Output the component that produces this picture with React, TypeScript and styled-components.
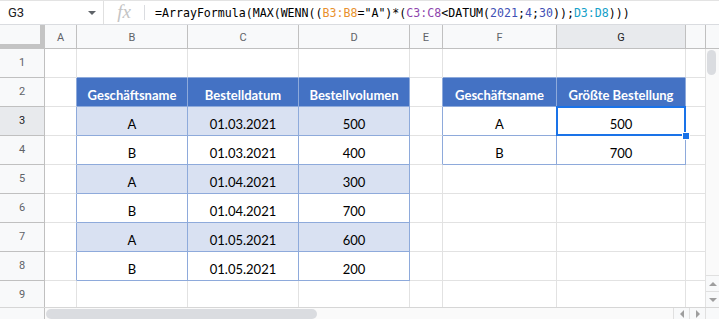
import React from 'react';
import styled, { createGlobalStyle } from 'styled-components';

const GlobalStyle = createGlobalStyle`
  html, body {
    margin: 0;
    padding: 0;
    background: #ffffff;
  }
  body {
    font-family: Roboto, "Liberation Sans", sans-serif;
  }
`;

const GRID = '#e2e2e2';
const HEAD_LINE = '#c0c0c0';
const TABLE_LINE = '#8eaadb';
const TABLE_HEAD = '#4472c4';
const BAND = '#d9e1f2';

// H is only partly visible, so its label is hidden
const columns = [
  { key: 'A', width: 32, label: 'A' },
  { key: 'B', width: 111, label: 'B' },
  { key: 'C', width: 111, label: 'C' },
  { key: 'D', width: 111, label: 'D' },
  { key: 'E', width: 33, label: 'E' },
  { key: 'F', width: 114, label: 'F' },
  { key: 'G', width: 129, label: 'G' },
  { key: 'H', width: 20, label: '' },
];

const cells: Record<string, string> = {
  B2: 'Geschäftsname',
  C2: 'Bestelldatum',
  D2: 'Bestellvolumen',
  F2: 'Geschäftsname',
  G2: 'Größte Bestellung',
  B3: 'A', C3: '01.03.2021', D3: '500',
  B4: 'B', C4: '01.03.2021', D4: '400',
  B5: 'A', C5: '01.04.2021', D5: '300',
  B6: 'B', C6: '01.04.2021', D6: '700',
  B7: 'A', C7: '01.05.2021', D7: '600',
  B8: 'B', C8: '01.05.2021', D8: '200',
  F3: 'A', G3: '500',
  F4: 'B', G4: '700',
};

const rows = [1, 2, 3, 4, 5, 6, 7, 8, 9];
const selCol = 7;
const selRow = 3;

// col index: A = 1 ... H = 8
const inMain = (c: number, r: number) => c >= 2 && c <= 4 && r >= 2 && r <= 8;
const inSide = (c: number, r: number) => c >= 6 && c <= 7 && r >= 2 && r <= 4;
const inTable = (c: number, r: number) => inMain(c, r) || inSide(c, r);

const rightLine = (c: number, r: number) =>
  inTable(c, r) || inTable(c + 1, r) ? TABLE_LINE : GRID;
const bottomLine = (c: number, r: number) =>
  inTable(c, r) || inTable(c, r + 1) ? TABLE_LINE : GRID;

const cellFill = (c: number, r: number) => {
  if (!inTable(c, r)) return '#ffffff';
  if (r === 2) return TABLE_HEAD;
  if (inMain(c, r) && r % 2 === 1) return BAND;
  return '#ffffff';
};

const formula: { text: string; color?: string }[] = [
  { text: '=ArrayFormula(MAX(WENN((' },
  { text: 'B3:B8', color: '#e8912d' },
  { text: '="A")*(' },
  { text: 'C3:C8', color: '#8e44ad' },
  { text: '<DATUM(' },
  { text: '2021', color: '#3f51b5' },
  { text: ';' },
  { text: '4', color: '#3f51b5' },
  { text: ';' },
  { text: '30', color: '#3f51b5' },
  { text: '));' },
  { text: 'D3:D8', color: '#15a0c8' },
  { text: ')))' },
];

export default function App() {
  return (
    <Page>
      <GlobalStyle />
      <FormulaBar>
        <NameBox>
          <NameText>G3</NameText>
          <Caret />
        </NameBox>
        <FxMark>fx</FxMark>
        <FxDivider />
        <FormulaText>
          {formula.map((part, i) => (
            <Token key={i} $color={part.color}>
              {part.text}
            </Token>
          ))}
        </FormulaText>
      </FormulaBar>

      <SheetArea>
        <Grid>
          <Corner />
          {columns.map((col, i) => (
            <ColHead key={col.key} $active={i + 1 === selCol}>
              {col.label}
            </ColHead>
          ))}
          {rows.map((r) => (
            <React.Fragment key={r}>
              <RowHead $active={r === selRow}>{r}</RowHead>
              {columns.map((col, i) => {
                const c = i + 1;
                const value = cells[col.key + r];
                const isHead = r === 2 && inTable(c, r);
                return (
                  <Cell
                    key={col.key}
                    $bg={cellFill(c, r)}
                    $right={rightLine(c, r)}
                    $bottom={bottomLine(c, r)}
                    $head={isHead}
                  >
                    {value}
                    {c === selCol && r === selRow && (
                      <Selection>
                        <FillHandle />
                      </Selection>
                    )}
                  </Cell>
                );
              })}
            </React.Fragment>
          ))}
        </Grid>

        <VScroll>
          <VScrollHead />
          <VTrack>
            <VThumb />
          </VTrack>
          <VButton>
            <Arrow $dir="up" />
          </VButton>
          <VButton>
            <Arrow $dir="down" />
          </VButton>
        </VScroll>
      </SheetArea>

      <HScroll>
        <HLead />
        <HTrack>
          <HThumb />
        </HTrack>
        <HButton>
          <Arrow $dir="left" />
        </HButton>
        <HButton>
          <Arrow $dir="right" />
        </HButton>
        <HCorner />
      </HScroll>
    </Page>
  );
}

const Page = styled.div`
  width: 719px;
  height: 319px;
  overflow: hidden;
  display: flex;
  flex-direction: column;
  background: #ffffff;
`;

const FormulaBar = styled.div`
  box-sizing: border-box;
  height: 25px;
  flex: none;
  display: flex;
  align-items: center;
  border-top: 1px solid #e3e3e3;
  border-bottom: 1px solid #dadce0;
`;

const NameBox = styled.div`
  box-sizing: border-box;
  width: 104px;
  height: 100%;
  display: flex;
  align-items: center;
  padding-left: 8px;
  border-right: 1px solid #e0e0e0;
`;

const NameText = styled.span`
  font-family: Roboto, "Liberation Sans", sans-serif;
  font-size: 13px;
  color: #202124;
`;

const Caret = styled.span`
  margin-left: auto;
  margin-right: 7px;
  width: 0;
  height: 0;
  border-left: 4px solid transparent;
  border-right: 4px solid transparent;
  border-top: 4px solid #5f6368;
`;

const FxMark = styled.span`
  width: 40px;
  text-align: center;
  font-family: "Liberation Serif", "DejaVu Serif", serif;
  font-style: italic;
  font-size: 19px;
  color: #c4c4c4;
  line-height: 1;
  margin-top: -2px;
`;

const FxDivider = styled.span`
  width: 1px;
  height: 15px;
  background: #dadce0;
`;

const FormulaText = styled.div`
  margin-left: 10px;
  font-family: "DejaVu Sans Mono", "Liberation Mono", monospace;
  font-size: 11.6px;
  color: #000000;
  white-space: nowrap;
`;

const Token = styled.span<{ $color?: string }>`
  color: ${(p) => p.$color || '#000000'};
`;

const SheetArea = styled.div`
  flex: 1;
  display: flex;
  overflow: hidden;
`;

const Grid = styled.div`
  display: grid;
  grid-template-columns: 45px ${columns.map((c) => `${c.width}px`).join(' ')};
  grid-template-rows: 24px;
  grid-auto-rows: 29px;
  align-content: start;
  width: 706px;
  flex: none;
  overflow: hidden;
`;

const Corner = styled.div`
  box-sizing: border-box;
  background: #f8f9fa;
  border-right: 5px solid #c4c4c4;
  border-bottom: 5px solid #c4c4c4;
`;

const HeadBase = styled.div<{ $active?: boolean }>`
  box-sizing: border-box;
  display: flex;
  align-items: center;
  justify-content: center;
  font-family: Roboto, "Liberation Sans", sans-serif;
  font-size: 11px;
  color: ${(p) => (p.$active ? '#202124' : '#5f6368')};
  background: ${(p) => (p.$active ? '#e8eaed' : '#f8f9fa')};
`;

const ColHead = styled(HeadBase)`
  border-right: 1px solid ${HEAD_LINE};
  border-bottom: 1px solid ${HEAD_LINE};
  padding-top: 1px;
`;

const RowHead = styled(HeadBase)`
  border-right: 1px solid ${HEAD_LINE};
  border-bottom: 1px solid ${HEAD_LINE};
  padding-bottom: 1px;
`;

const Cell = styled.div<{ $bg: string; $right: string; $bottom: string; $head?: boolean }>`
  box-sizing: border-box;
  position: relative;
  display: flex;
  align-items: flex-end;
  justify-content: center;
  padding-bottom: 3px;
  white-space: nowrap;
  background: ${(p) => p.$bg};
  border-right: 1px solid ${(p) => p.$right};
  border-bottom: 1px solid ${(p) => p.$bottom};
  font-family: Lato, "Open Sans", sans-serif;
  font-size: 13px;
  font-weight: ${(p) => (p.$head ? 700 : 400)};
  color: ${(p) => (p.$head ? '#ffffff' : '#000000')};
`;

const Selection = styled.div`
  position: absolute;
  left: -1px;
  top: -1px;
  width: 130px;
  height: 30px;
  box-sizing: border-box;
  border: 2px solid #1a73e8;
  z-index: 2;
`;

const FillHandle = styled.div`
  position: absolute;
  left: 124px;
  top: 24px;
  width: 6px;
  height: 6px;
  background: #1a73e8;
  border: 1px solid #ffffff;
`;

const VScroll = styled.div`
  flex: 1;
  display: flex;
  flex-direction: column;
`;

const VScrollHead = styled.div`
  box-sizing: border-box;
  height: 24px;
  background: #f8f9fa;
  border-bottom: 1px solid ${HEAD_LINE};
`;

const VTrack = styled.div`
  flex: 1;
  background: #fafafa;
  padding: 1px 0 0 1px;
`;

const VThumb = styled.div`
  width: 9px;
  height: 25px;
  border-radius: 5px;
  background: #dadce0;
`;

const VButton = styled.div`
  box-sizing: border-box;
  height: 16px;
  display: flex;
  align-items: center;
  justify-content: center;
  background: #f8f9fa;
  border-top: 1px solid #e0e0e0;
`;

const Arrow = styled.span<{ $dir: 'up' | 'down' | 'left' | 'right' }>`
  width: 0;
  height: 0;
  ${(p) =>
    p.$dir === 'up'
      ? 'border-left: 4px solid transparent; border-right: 4px solid transparent; border-bottom: 4px solid #9e9e9e;'
      : p.$dir === 'down'
      ? 'border-left: 4px solid transparent; border-right: 4px solid transparent; border-top: 4px solid #9e9e9e;'
      : p.$dir === 'left'
      ? 'border-top: 4px solid transparent; border-bottom: 4px solid transparent; border-right: 4px solid #9e9e9e;'
      : 'border-top: 4px solid transparent; border-bottom: 4px solid transparent; border-left: 4px solid #9e9e9e;'}
`;

const HScroll = styled.div`
  box-sizing: border-box;
  height: 12px;
  flex: none;
  display: flex;
  border-top: 1px solid #d6d6d6;
  background: #fafafa;
`;

const HLead = styled.div`
  box-sizing: border-box;
  width: 45px;
  background: #f8f9fa;
  border-right: 1px solid ${HEAD_LINE};
`;

const HTrack = styled.div`
  flex: 1;
  padding: 1px 0 0 1px;
`;

const HThumb = styled.div`
  width: 271px;
  height: 10px;
  border-radius: 5px;
  background: #dadce0;
`;

const HButton = styled.div`
  box-sizing: border-box;
  width: 16px;
  display: flex;
  align-items: center;
  justify-content: center;
  background: #f8f9fa;
  border-left: 1px solid #e0e0e0;
`;

const HCorner = styled.div`
  box-sizing: border-box;
  width: 14px;
  background: #f8f9fa;
  border-left: 1px solid #e0e0e0;
`;
